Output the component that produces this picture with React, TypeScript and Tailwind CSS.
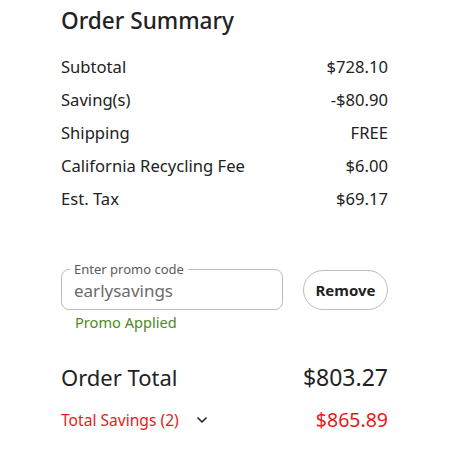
import { ChevronDown } from 'lucide-react';

const ROWS = [
  { label: 'Subtotal', value: '$728.10' },
  { label: 'Saving(s)', value: '-$80.90' },
  { label: 'Shipping', value: 'FREE' },
  { label: 'California Recycling Fee', value: '$6.00' },
  { label: 'Est. Tax', value: '$69.17' },
];

export default function App() {
  return (
    <div className="w-[450px] h-[450px] bg-white text-[#222222] font-['Noto_Sans',sans-serif]">
      <div className="ml-[61px] w-[327px] pt-[4px]">
        <h2 className="text-[22.6px] leading-[34px] font-medium">Order Summary</h2>

        <div className="mt-[17px] flex flex-col gap-[9px]">
          {ROWS.map((r) => (
            <div key={r.label} className="flex justify-between text-[16.6px] leading-[24px]">
              <span>{r.label}</span>
              <span>{r.value}</span>
            </div>
          ))}
        </div>

        <div className="mt-[58px] flex items-start gap-[20px]">
          <div className="flex-1">
            <div className="relative h-[41px] border border-[#bdbdbd] rounded-[8px] px-[12px] flex items-end pb-[6px]">
              <span className="absolute left-[8px] -top-[9px] bg-white px-[4px] text-[13px] leading-[16px] text-[#5b5b5b]">
                Enter promo code
              </span>
              <span className="text-[17px] leading-[24px] text-[#6b6b6b]">earlysavings</span>
            </div>
            <div className="mt-[1px] pl-[14px] text-[14.6px] leading-[22px] text-[#4d8a1f]">Promo Applied</div>
          </div>
          <button className="mt-[1px] w-[85px] h-[40px] rounded-full border border-[#bdbdbd] text-[15px] font-bold text-[#222222]">
            Remove
          </button>
        </div>

        <div className="mt-[29px] flex justify-between items-center leading-[30px]">
          <span className="text-[22px] font-normal">Order Total</span>
          <span className="text-[23px] font-normal">$803.27</span>
        </div>

        <div className="mt-[15px] flex justify-between items-center text-[#e8191a]">
          <div className="flex items-center gap-[15px] text-[15.6px] leading-[22px]">
            <span>Total Savings (2)</span>
            <ChevronDown size={16} strokeWidth={2.5} className="text-[#222222]" />
          </div>
          <span className="text-[19.5px] leading-[26px] font-normal">$865.89</span>
        </div>
      </div>
    </div>
  );
}
